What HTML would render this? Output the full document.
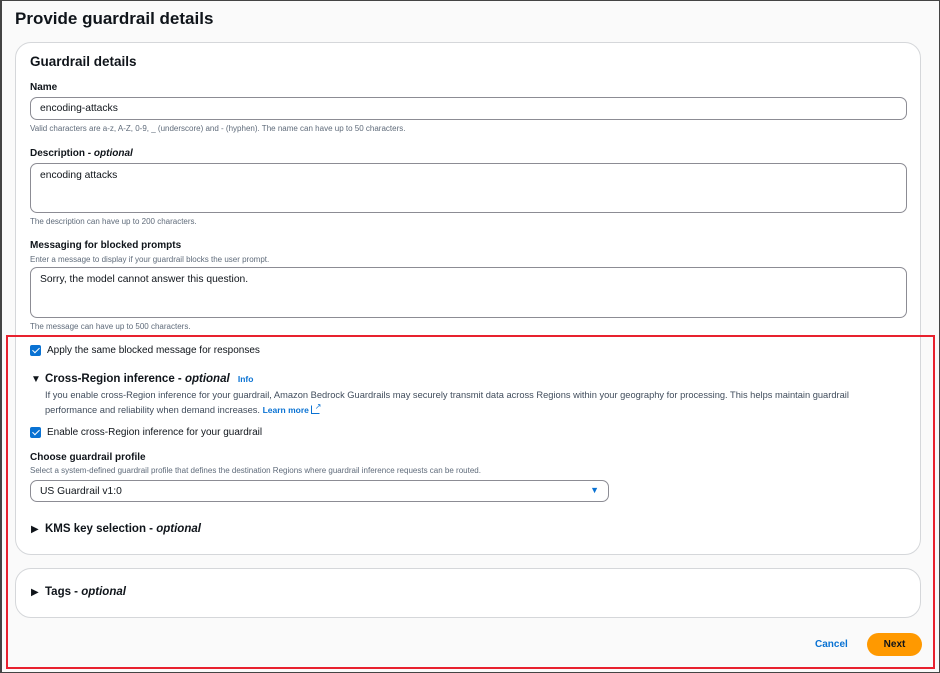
<!DOCTYPE html>
<html><head><style>
*{box-sizing:border-box;margin:0;padding:0}
body{width:940px;height:673px;background:#fafafa;font-family:"Liberation Sans",sans-serif;color:#0f141a;position:relative;overflow:hidden}
.frame{position:absolute;left:0;top:0;width:940px;height:673px;border:1.5px solid #444;border-left-width:2px}
.a{position:absolute;white-space:nowrap}
.card{position:absolute;background:#fff;border:1px solid #d5d7da;border-radius:16px}
.in{position:absolute;left:30px;width:877px;border:1px solid #8c8c94;border-radius:7px;background:#fff;font-size:10.3px;padding:6px 9px}
.lbl{font-size:10px;font-weight:bold}
.hint{font-size:8px;color:#5f6b7a}
.cb{position:absolute;width:11px;height:11px;background:#0972d3;border-radius:2px}
.cb:after{content:"";position:absolute;left:3.5px;top:1px;width:3px;height:6px;border:solid #fff;border-width:0 1.5px 1.5px 0;transform:rotate(45deg)}
.tri{font-size:10px}
</style></head><body>
<div class="frame"></div>
<div class="a" style="left:15px;top:9px;font-size:17px;font-weight:bold">Provide guardrail details</div>
<div class="card" style="left:15px;top:42px;width:906px;height:513px"></div>
<div class="card" style="left:15px;top:568px;width:906px;height:50px"></div>
<div class="a" style="left:30px;top:54px;font-size:13.5px;font-weight:bold">Guardrail details</div>
<div class="a lbl" style="left:30px;top:82px">Name</div>
<div class="in" style="top:97px;height:23px;padding-top:5px">encoding-attacks</div>
<div class="a hint" style="left:30px;top:124px">Valid characters are a-z, A-Z, 0-9, _ (underscore) and - (hyphen). The name can have up to 50 characters.</div>
<div class="a lbl" style="left:30px;top:148px">Description - <i>optional</i></div>
<div class="in" style="top:163px;height:50px">encoding attacks</div>
<div class="a hint" style="left:30px;top:217px">The description can have up to 200 characters.</div>
<div class="a lbl" style="left:30px;top:240px">Messaging for blocked prompts</div>
<div class="a hint" style="left:30px;top:255px">Enter a message to display if your guardrail blocks the user prompt.</div>
<div class="in" style="top:267px;height:51px">Sorry, the model cannot answer this question.</div>
<div class="a hint" style="left:30px;top:322px">The message can have up to 500 characters.</div>
<div class="a" style="left:6px;top:335px;width:929px;height:334px;border:2px solid #e8212e"></div>
<div class="cb" style="left:30px;top:345px"></div>
<div class="a" style="left:47px;top:345px;font-size:10px">Apply the same blocked message for responses</div>
<div class="a tri" style="left:31px;top:374px">▼</div>
<div class="a" style="left:45px;top:373px;font-size:11.5px;font-weight:bold">Cross-Region inference - <i>optional</i> <span style="color:#0972d3;font-size:8.5px;margin-left:5px">Info</span></div>
<div class="a" style="left:45px;top:388px;font-size:9.3px;color:#414d5c;line-height:14.5px;white-space:normal;width:832px">If you enable cross-Region inference for your guardrail, Amazon Bedrock Guardrails may securely transmit data across Regions within your geography for processing. This helps maintain guardrail performance and reliability when demand increases. <b style="color:#0972d3;font-size:8.5px">Learn more</b> <span style="display:inline-block;width:9px;height:9px;border:1.5px solid #0972d3;border-top-color:transparent;border-right-color:transparent;vertical-align:-1px;position:relative"><span style="position:absolute;right:-2px;top:-2px;color:#0972d3;font-size:8px;line-height:6px">↗</span></span></div>
<div class="cb" style="left:30px;top:427px"></div>
<div class="a" style="left:47px;top:427px;font-size:10px">Enable cross-Region inference for your guardrail</div>
<div class="a lbl" style="left:30px;top:452px">Choose guardrail profile</div>
<div class="a hint" style="left:30px;top:466px">Select a system-defined guardrail profile that defines the destination Regions where guardrail inference requests can be routed.</div>
<div class="in" style="top:480px;width:579px;height:22px;padding-top:5px">US Guardrail v1:0<span style="position:absolute;right:9px;top:4px;color:#0972d3;font-size:9px">▼</span></div>
<div class="a tri" style="left:31px;top:524px">▶</div>
<div class="a" style="left:45px;top:523px;font-size:11.5px;font-weight:bold">KMS key selection - <i>optional</i></div>
<div class="a tri" style="left:31px;top:587px">▶</div>
<div class="a" style="left:45px;top:586px;font-size:11.5px;font-weight:bold">Tags - <i>optional</i></div>
<div class="a" style="left:815px;top:639px;font-size:10px;font-weight:bold;color:#0972d3">Cancel</div>
<div class="a" style="left:867px;top:633px;width:55px;height:23px;border-radius:12px;background:#ff9900;font-size:10px;font-weight:bold;text-align:center;line-height:23px">Next</div>
</body></html>
